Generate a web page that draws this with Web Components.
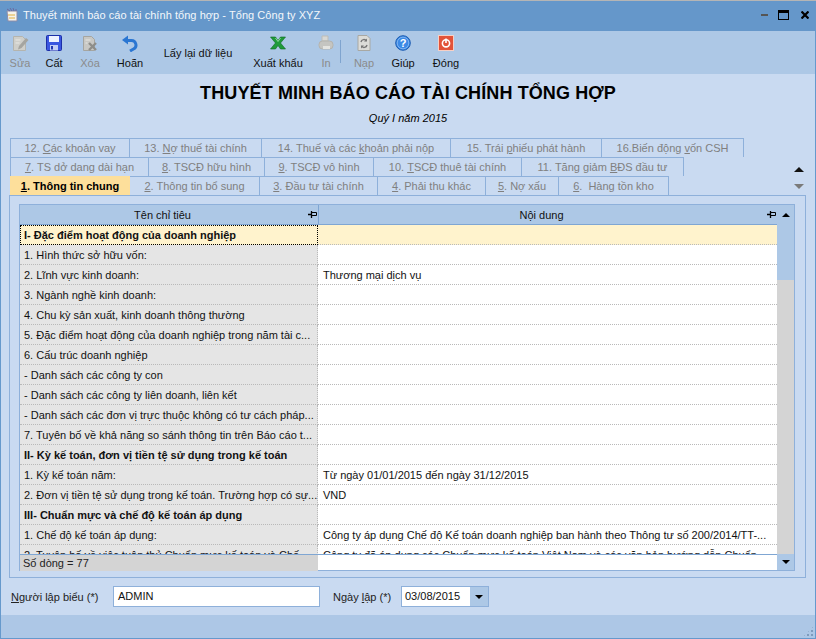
<!DOCTYPE html>
<html lang="vi">
<head>
<meta charset="utf-8">
<title>Thuyết minh báo cáo tài chính tổng hợp</title>
<style>
  html, body { margin: 0; padding: 0; height: 100%; overflow: hidden; }
  body { font: 11px "Liberation Sans", Arial, sans-serif; color: #000; }
</style>
</head>
<body>
<fs-window>
  <fs-titlebar slot="title">Thuyết minh báo cáo tài chính tổng hợp - Tổng Công ty XYZ</fs-titlebar>
  <fs-toolbar slot="toolbar"></fs-toolbar>
  <fs-heading slot="head"></fs-heading>
  <fs-tabs slot="tabs"></fs-tabs>
  <fs-panel slot="panel"><fs-grid></fs-grid></fs-panel>
  <fs-footer slot="footer"></fs-footer>
</fs-window>

<script>
// Form mockup: each strip of the window is its own small element.
(function () {
  const FONT = '"Liberation Sans", Arial, sans-serif';
  const esc = (s) => String(s).replace(/&/g, '&amp;').replace(/</g, '&lt;').replace(/>/g, '&gt;');

  const ICONS = {
    sua: `<svg width="17" height="17" viewBox="0 0 17 17"><path d="M1.500 1.500h9l3 3v11h-12z" fill="#cfcfca" stroke="#b4b4ae"/><path d="M7 11l7-8 2.500 2-7 8-3.500 1.500z" fill="#a5a5a0"/><path d="M3.500 5h5M3.500 8h4" stroke="#e8e8e4"/></svg>`,
    cat: `<svg width="16" height="16" viewBox="0 0 16 16"><rect x=".5" y=".5" width="15" height="15" rx="1" fill="#3a56e0" stroke="#1c2fa8"/><rect x="3" y="1" width="10" height="6" fill="#eef2ff"/><rect x="4" y="10" width="8" height="5.500" fill="#c3cdf5"/><rect x="5" y="11" width="2" height="3.500" fill="#2238b0"/></svg>`,
    xoa: `<svg width="17" height="17" viewBox="0 0 17 17"><path d="M1.500 1.500h8l3 3v11h-11z" fill="#c8c8c4" stroke="#a5a5a0"/><path d="M7 8l7 7M14 8l-7 7" stroke="#8e8e8a" stroke-width="2.400"/><path d="M3.500 5h5M3.500 8h2" stroke="#e6e6e2"/></svg>`,
    hoan: `<svg width="18" height="17" viewBox="0 0 18 17"><path d="M4 5.500h6.500a4.500 4.500 0 0 1 2 8.500L9 16" fill="none" stroke="#2a76d2" stroke-width="3"/><path d="M1 5L7 .5v9z" fill="#2a76d2"/></svg>`,
    excel: `<svg width="16" height="14" viewBox="0 0 16 14"><path d="M.5 1h5L8 4.500 10.500 1h5l-5 6 5 6h-5L8 9.500 5.500 13h-5l5-6z" fill="#1f9b3a" stroke="#0e6a22" stroke-width=".6"/><path d="M5.500 2L8 5.500 10.500 2" fill="none" stroke="#8fdc9c"/></svg>`,
    print: `<svg width="16" height="16" viewBox="0 0 16 16"><path d="M4 1h6v5H4z" fill="#d8d8d4" stroke="#bcbcb7"/><rect x="1" y="6" width="14" height="8" rx="3.500" fill="#c5c5c1" stroke="#b4b4af"/><rect x="5" y="11" width="7" height="3" fill="#e4e4e0"/></svg>`,
    nap: `<svg width="14" height="16" viewBox="0 0 14 16"><path d="M1 .5h9l3 3V15.500H1z" fill="#dcdcd8" stroke="#a8a8a3"/><path d="M4 7a3 3 0 0 1 5.500-1M10 10a3 3 0 0 1-5.500 1" fill="none" stroke="#777" stroke-width="1.400"/><path d="M10 3.500v3H7zM4 13.500v-3h3z" fill="#777"/></svg>`,
    giup: `<svg width="16" height="16" viewBox="0 0 16 16"><circle cx="8" cy="8" r="7.300" fill="#3d8ae6" stroke="#1d5cb0"/><circle cx="8" cy="8" r="5.800" fill="none" stroke="#a6cdf7" stroke-opacity=".6"/><text x="8" y="12" text-anchor="middle" font-size="11" font-weight="700" font-family="Liberation Sans" fill="#fff">?</text></svg>`,
    dong: `<svg width="16" height="16" viewBox="0 0 16 16"><rect x=".5" y=".5" width="15" height="15" fill="#e2533a" stroke="#f7cfc4"/><circle cx="8" cy="8.300" r="3.600" fill="none" stroke="#fff" stroke-width="1.600"/><path d="M8 3.500v4.500" stroke="#fff" stroke-width="1.600"/></svg>`,
  };

  class FsWindow extends HTMLElement {
    connectedCallback() {
      this.attachShadow({ mode: 'open' }).innerHTML = `
        <style>
          :host { display: flex; flex-direction: column; box-sizing: border-box; width: 816px; height: 639px;
                  background: #c9daf1; border: 1px solid #6699cc; border-top: 0; font-family: ${FONT}; position: relative; }
          .grow { flex: 1; display: flex; flex-direction: column; padding: 0 9px 0 8px; }
          .status { height: 23px; background: #adc7e6; flex: none; }
          .grip { position: absolute; right: 1px; bottom: 1px; width: 11px; height: 11px;
                  background: radial-gradient(circle at 1px 1px, #7f9bbd 1px, transparent 1.200px) 0 0/4px 4px;
                  clip-path: polygon(100% 0, 100% 100%, 0 100%); }
        </style>
        <slot name="title"></slot>
        <slot name="toolbar"></slot>
        <slot name="head"></slot>
        <div class="grow">
          <slot name="tabs"></slot>
          <slot name="panel"></slot>
          <slot name="footer"></slot>
        </div>
        <div class="status"></div>
        <div class="grip"></div>`;
    }
  }

  class FsTitlebar extends HTMLElement {
    connectedCallback() {
      this.attachShadow({ mode: 'open' }).innerHTML = `
        <style>
          :host { display: flex; align-items: center; height: 31px; box-sizing: border-box; flex: none; margin: 0 -1px;
                  background: #6597ca; border-top: 1px solid #b5b5b5; font-size: 11px; padding: 0 0 2px 4px; }
          svg { flex: none; }
          .ico { margin-right: 3px; }
          .t { flex: 1; color: #f4f7fb; white-space: nowrap; letter-spacing: .05px; }
          .b { display: flex; align-items: center; padding-right: 7px; }
          .min { width: 7px; height: 2px; background: #555; margin-right: 10px; }
          .max { box-sizing: border-box; width: 11px; height: 10px; border: 1px solid #000; border-top-width: 3px; margin-right: 12px; }
        </style>
        <svg class="ico" width="16" height="16" viewBox="0 0 16 16"><path d="M3 4h10v10H4z" fill="#f6f3ea" stroke="#8c8ca8"/><path d="M3 2l3 2M6 1l2 3M9 1l1 3M12 2l0 2" stroke="#6a6aa0"/><path d="M4 8l7 0M5 11l6 0" stroke="#e0b040"/></svg>
        <span class="t"><slot></slot></span>
        <span class="b"><span class="min"></span><span class="max"></span><svg width="8" height="8" viewBox="0 0 8 8"><path d="M.5 .5l7 7M7.500 .5l-7 7" stroke="#000" stroke-width="2.200"/></svg></span>`;
    }
  }

  const TOOLS = [
    { k: 'sua', l: 'Sửa', off: 1, w: 38 },
    { k: 'cat', l: 'Cất', w: 30 },
    { k: 'xoa', l: 'Xóa', off: 1, w: 42 },
    { k: 'hoan', l: 'Hoãn', w: 38 },
    { l: 'Lấy lại dữ liệu', w: 98, plain: 1 },
    { k: 'excel', l: 'Xuất khẩu', w: 62 },
    { k: 'print', l: 'In', off: 1, w: 34 },
    { sep: 1 },
    { k: 'nap', l: 'Nạp', off: 1, w: 42 },
    { k: 'giup', l: 'Giúp', w: 36 },
    { k: 'dong', l: 'Đóng', w: 50 },
  ];

  class FsToolbar extends HTMLElement {
    connectedCallback() {
      const items = TOOLS.map((t) => {
        if (t.sep) return `<span class="sep"></span>`;
        if (t.plain) return `<span class="btn plain" style="width:${t.w}px">${esc(t.l)}</span>`;
        return `<span class="btn${t.off ? ' off' : ''}" style="width:${t.w}px"><span class="ic">${ICONS[t.k]}</span><span>${esc(t.l)}</span></span>`;
      }).join('');
      this.attachShadow({ mode: 'open' }).innerHTML = `
        <style>
          :host { display: flex; align-items: stretch; height: 43px; flex: none; background: #adc8e6; font-size: 11px; }
          .btn { display: flex; flex-direction: column; align-items: center; color: #111; white-space: nowrap; flex: none; padding-top: 3px; box-sizing: border-box; }
          .ic { height: 18px; display: flex; align-items: center; justify-content: center; margin-bottom: 5px; }
          .off { color: #8b8b8b; }
          .plain { justify-content: center; padding: 0; }
          .sep { width: 1px; height: 23px; background: #7fa4cf; margin: 9px 2px 0 -3px; flex: none; }
        </style>
        ${items}`;
    }
  }

  class FsHeading extends HTMLElement {
    connectedCallback() {
      this.attachShadow({ mode: 'open' }).innerHTML = `
        <style>
          :host { display: flex; flex-direction: column; align-items: center; flex: none; height: 64px; box-sizing: border-box; padding-top: 8px; }
          h1 { margin: 0; font: 700 18px/22px ${FONT}; letter-spacing: .12px; }
          p { margin: 6px 0 0; font: italic 11px/16px ${FONT}; }
        </style>
        <h1>THUYẾT MINH BÁO CÁO TÀI CHÍNH TỔNG HỢP</h1>
        <p>Quý I năm 2015</p>`;
    }
  }

  const TAB_ROWS = [
    [['12. ', 'C', 'ác khoản vay', 120], ['13. ', 'N', 'ợ thuế tài chính', 132], ['14. Thuế và các ', 'k', 'hoản phải nộp', 189], ['15. Trái ', 'p', 'hiếu phát hành', 151], ['16.Biến động ', 'v', 'ốn CSH', 142]],
    [['', '7', '. TS dở dang dài hạn', 139], ['', '8', '. TSCĐ hữu hình', 116], ['', '9', '. TSCĐ vô hình', 109], ['10. ', 'T', 'SCĐ thuê tài chính', 148], ['11. Tăng giảm ', 'B', 'ĐS đầu tư', 162]],
    [['', '1', '. Thông tin chung', 120, 1], ['', '2', '. Thông tin bổ sung', 130], ['', '3', '. Đầu tư tài chính', 118], ['', '4', '. Phải thu khác', 108], ['', '5', '. Nợ xấu', 73], ['', '6', '.  Hàng tồn kho', 110]],
  ];

  class FsTabs extends HTMLElement {
    connectedCallback() {
      const rows = TAB_ROWS.map((r) => `<div class="row">${r.map((t) =>
        `<span class="tab${t[4] ? ' on' : ''}" style="width:${t[3]}px">${esc(t[0])}<u>${esc(t[1])}</u>${esc(t[2])}</span>`).join('')}</div>`).join('');
      this.attachShadow({ mode: 'open' }).innerHTML = `
        <style>
          :host { display: block; flex: none; height: 57px; position: relative; }
          .row { display: flex; height: 19px; margin-left: 1px; }
          .tab { box-sizing: border-box; flex: none; display: flex; align-items: center; justify-content: center; white-space: pre;
                 border: 1px solid #8eb0da; border-left: 0; border-bottom: 0; color: #808080; font-size: 11px; }
          .row .tab:first-child { border-left: 1px solid #8eb0da; }
          .on { background: #fddf9b; color: #000; font-weight: 700; border-color: #fddf9b; }
          .row .on:first-child { border-left-color: #fddf9b; }
          .up, .dn { position: absolute; left: 785px; width: 0; height: 0; border: 5px solid transparent; border-top-width: 0; border-bottom: 5px solid #111; }
          .up { top: 29px; }
          .dn { top: 46px; transform: scaleY(-1); border-bottom-color: #7a7a7a; }
        </style>
        ${rows}
        <span class="up"></span><span class="dn"></span>`;
    }
  }

  class FsPanel extends HTMLElement {
    connectedCallback() {
      this.attachShadow({ mode: 'open' }).innerHTML = `
        <style>
          :host { display: flex; box-sizing: border-box; height: 383px; flex: none; border: 1px solid #8eb0da; padding: 8px 10px 6px 9px; }
        </style>
        <slot></slot>`;
    }
  }

  const ROWS = [
    ['I- Đặc điểm hoạt động của doanh nghiệp', '', 'sel'],
    ['1. Hình thức sở hữu vốn:', ''],
    ['2. Lĩnh vực kinh doanh:', 'Thương mại dịch vụ'],
    ['3. Ngành nghề kinh doanh:', ''],
    ['4. Chu kỳ sản xuất, kinh doanh thông thường', ''],
    ['5. Đặc điểm hoạt động của doanh nghiệp trong năm tài c...', ''],
    ['6. Cấu trúc doanh nghiệp', ''],
    ['- Danh sách các công ty con', ''],
    ['- Danh sách các công ty liên doanh, liên kết', ''],
    ['- Danh sách các đơn vị trực thuộc không có tư cách pháp...', ''],
    ['7. Tuyên bố về khả năng so sánh thông tin trên Báo cáo t...', ''],
    ['II- Kỳ kế toán, đơn vị tiền tệ sử dụng trong kế toán', '', 'b'],
    ['1. Kỳ kế toán năm:', 'Từ ngày 01/01/2015 đến ngày 31/12/2015'],
    ['2. Đơn vị tiền tệ sử dụng trong kế toán. Trường hợp có sự...', 'VND'],
    ['III- Chuẩn mực và chế độ kế toán áp dụng', '', 'b'],
    ['1. Chế độ kế toán áp dụng:', 'Công ty áp dụng Chế độ Kế toán doanh nghiệp ban hành theo Thông tư số 200/2014/TT-...'],
    ['2. Tuyên bố về việc tuân thủ Chuẩn mực kế toán và Chế...', 'Công ty đã áp dụng các Chuẩn mực kế toán Việt Nam và các văn bản hướng dẫn Chuẩn...'],
  ];

  const PIN = `<svg class="pin" width="9" height="7" viewBox="0 0 9 7"><path d="M0 3.500h3M3.500 0v7" fill="none" stroke="#000" stroke-width="1.300"/><path d="M3.500 1.500h5v3h-5" fill="none" stroke="#000"/></svg>`;

  class FsGrid extends HTMLElement {
    connectedCallback() {
      const rows = ROWS.map((r) => `
        <div class="row ${r[2] || ''}"><div class="a">${esc(r[0])}</div><div class="c">${esc(r[1])}</div></div>`).join('');
      this.attachShadow({ mode: 'open' }).innerHTML = `
        <style>
          :host { display: grid; grid-template-columns: 1fr 17px; grid-template-rows: 20px 1fr 16px; flex: 1; box-sizing: border-box;
                  border: 1px solid #8eb0da; background: #fff; min-height: 0; font-size: 11px; }
          .head { display: grid; grid-template-columns: 298px 1fr; background: #adc8e6; border-bottom: 1px solid #7fa6d3; box-sizing: border-box; }
          .head div { display: flex; align-items: center; justify-content: center; position: relative; color: #111; padding-right: 13px; box-sizing: border-box; }
          .head div + div { border-left: 1px solid #7fa6d3; }
          .pin { position: absolute; right: 1px; top: 6px; }
          .body { overflow: hidden; min-height: 0; }
          .row { display: grid; grid-template-columns: 298px 1fr; height: 20px; box-sizing: border-box; }
          .a, .c { box-sizing: border-box; padding: 0 0 0 4px; line-height: 21px; white-space: nowrap; overflow: hidden;
                   border-bottom: 1px dotted #b9b9b9; color: #111; }
          .a { background: #e5e5e5; border-right: 1px dotted #b9b9b9; }
          .c { padding-left: 5px; }
          .b .a { font-weight: 700; }
          .sel .a { font-weight: 700; background: #fff3cd; outline: 1px dotted #000; outline-offset: -1px; border: 0; }
          .sel .c { background: #fff3cd; }
          .sb { grid-column: 2; grid-row: 1 / span 3; display: grid; grid-template-rows: 20px 55px 1fr 16px; }
          .btn { background: #adc8e6; display: flex; align-items: center; justify-content: center; }
          .btn i { width: 0; height: 0; border: 4px solid transparent; }
          .btn.u i { border-top-width: 0; border-bottom: 4px solid #000; }
          .btn.d i { border-bottom-width: 0; border-top: 4px solid #000; }
          .thumb { background: #adc8e6; }
          .track { background: #d4d4d4; }
          .foot { display: grid; grid-template-columns: 298px 1fr; border-top: 1px solid #7fa6d3; box-sizing: border-box; background: #fff; }
          .foot .n { background: #d4d4d4; padding-left: 3px; line-height: 16px; color: #222; }
        </style>
        <div class="head"><div>Tên chỉ tiêu${PIN}</div><div>Nội dung${PIN}</div></div>
        <div class="body">${rows}</div>
        <div class="foot"><div class="n">Số dòng = 77</div><div></div></div>
        <div class="sb">
          <div class="btn u"><i></i></div><div class="thumb"></div><div class="track"></div><div class="btn d"><i></i></div>
        </div>`;
    }
  }

  class FsFooter extends HTMLElement {
    connectedCallback() {
      this.attachShadow({ mode: 'open' }).innerHTML = `
        <style>
          :host { display: flex; align-items: center; flex: 1; padding-left: 2px; font-size: 11px; color: #222; }
          .inp { box-sizing: border-box; height: 21px; border: 1px solid #8eb0da; background: #fff; line-height: 19px; padding-left: 4px; color: #111; }
          .lbl1 { width: 85px; white-space: nowrap; flex: none; }
          .name { width: 207px; margin-left: 17px; }
          .lbl2 { margin-left: 13px; width: 58px; white-space: nowrap; flex: none; }
          .date { display: flex; width: 88px; margin-left: 10px; padding-left: 3px; }
          .date span { flex: 1; }
          .date b { width: 18px; background: #adc8e6; display: flex; align-items: center; justify-content: center; }
          .date i { width: 0; height: 0; border: 4px solid transparent; border-bottom-width: 0; border-top: 4px solid #000; }
        </style>
        <span class="lbl1"><u>N</u>gười lập biểu (*)</span>
        <div class="inp name">ADMIN</div>
        <span class="lbl2">Ngày <u>l</u>ập (*)</span>
        <div class="inp date"><span>03/08/2015</span><b><i></i></b></div>`;
    }
  }

  customElements.define('fs-window', FsWindow);
  customElements.define('fs-titlebar', FsTitlebar);
  customElements.define('fs-toolbar', FsToolbar);
  customElements.define('fs-heading', FsHeading);
  customElements.define('fs-tabs', FsTabs);
  customElements.define('fs-panel', FsPanel);
  customElements.define('fs-grid', FsGrid);
  customElements.define('fs-footer', FsFooter);
})();
</script>
</body>
</html>
